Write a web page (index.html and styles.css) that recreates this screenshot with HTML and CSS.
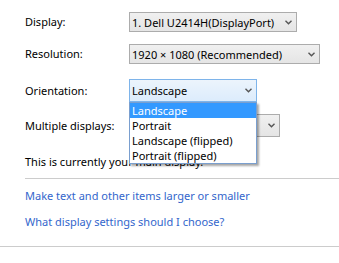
FILE: index.html
```html
<!DOCTYPE html>
<html lang="en">
<head>
    <meta charset="UTF-8">
    <meta name="viewport" content="width=device-width, initial-scale=1.0">
    <title>Screen Resolution</title>
    <link rel="stylesheet" href="styles.css">
</head>
<body>
    <div class="panel">
        <div class="row row-display">
            <span class="label">Display:</span>
            <div class="select select-display">
                <span class="value">1. Dell U2414H(DisplayPort)</span>
                <svg class="chevron" width="7" height="5" viewBox="0 0 7 5"><path d="M0.5 0.8 L3.5 3.8 L6.5 0.8" fill="none" stroke="#555" stroke-width="1.4"/></svg>
            </div>
        </div>
        <div class="row row-resolution">
            <span class="label">Resolution:</span>
            <div class="select select-resolution">
                <span class="value">1920 &times; 1080 (Recommended)</span>
                <svg class="chevron" width="7" height="5" viewBox="0 0 7 5"><path d="M0.5 0.8 L3.5 3.8 L6.5 0.8" fill="none" stroke="#555" stroke-width="1.4"/></svg>
            </div>
        </div>
        <div class="row row-orientation">
            <span class="label">Orientation:</span>
            <div class="select-wrap">
                <div class="select select-orientation focused">
                    <span class="value">Landscape</span>
                    <svg class="chevron" width="7" height="5" viewBox="0 0 7 5"><path d="M0.5 0.8 L3.5 3.8 L6.5 0.8" fill="none" stroke="#555" stroke-width="1.4"/></svg>
                </div>
                <ul class="droplist">
                    <li class="selected">Landscape</li>
                    <li>Portrait</li>
                    <li>Landscape (flipped)</li>
                    <li>Portrait (flipped)</li>
                </ul>
            </div>
        </div>
        <div class="row row-multiple">
            <span class="label">Multiple displays:</span>
            <div class="select select-multiple">
                <span class="value"></span>
                <svg class="chevron" width="7" height="5" viewBox="0 0 7 5"><path d="M0.5 0.8 L3.5 3.8 L6.5 0.8" fill="none" stroke="#555" stroke-width="1.4"/></svg>
            </div>
        </div>
        <p class="note">This is currently your main display.</p>
        <div class="sep"></div>
        <a class="link link-first" href="#">Make text and other items larger or smaller</a>
        <a class="link" href="#">What display settings should I choose?</a>
    </div>
    <div class="bottom-line"></div>
</body>
</html>
```

FILE: styles.css
```css
body {
    margin: 0;
    background: #fff;
    font-family: "Noto Sans", "Open Sans", sans-serif;
    font-size: 11px;
    color: #000;
}
.panel {
    padding: 12px 0 0 25px;
}
.row {
    display: flex;
    align-items: flex-start;
}
.row-display {
    height: 32px;
}
.row-resolution {
    height: 35px;
}
.row-orientation {
    height: 35px;
}
.row-multiple {
    height: 40px;
}
.label {
    width: 104px;
    line-height: 20px;
}
.select {
    box-sizing: border-box;
    display: flex;
    align-items: center;
    justify-content: space-between;
    height: 20px;
    padding: 0 4px 0 2px;
    border: 1px solid #acacac;
    background: linear-gradient(#f0f0f0, #e5e5e5);
    white-space: nowrap;
}
.select-display {
    width: 168px;
}
.select-resolution {
    width: 191px;
}
.select-orientation {
    width: 128px;
    height: 23px;
}
.select-multiple {
    width: 151px;
    height: 23px;
}
.row-orientation .label,
.row-multiple .label {
    line-height: 23px;
}
.focused {
    border-color: #7eb4ea;
    background: linear-gradient(#ecf4fc, #dcecfc);
}
.chevron {
    flex: none;
}
.select-wrap {
    position: relative;
}
.droplist {
    position: absolute;
    top: 23px;
    left: 0;
    z-index: 2;
    box-sizing: border-box;
    width: 128px;
    margin: 0;
    padding: 0;
    list-style: none;
    background: #fff;
    border: 1px solid #7a9fcf;
    box-shadow: 2px 2px 2px rgba(0, 0, 0, 0.35);
}
.droplist li {
    height: 15px;
    line-height: 15px;
    padding-left: 2px;
    white-space: nowrap;
}
.droplist .selected {
    background: #3399ff;
    color: #fff;
}
.note {
    margin: 0;
    line-height: 16px;
}
.sep {
    height: 1px;
    margin-top: 8px;
    background: #cccccc;
}
.link {
    display: block;
    color: #3366cc;
    text-decoration: none;
    line-height: 16px;
}
.link-first {
    margin-top: 9px;
}
.link + .link {
    margin-top: 10px;
}
.bottom-line {
    height: 1px;
    margin-top: 16px;
    background: #cccccc;
}
```
